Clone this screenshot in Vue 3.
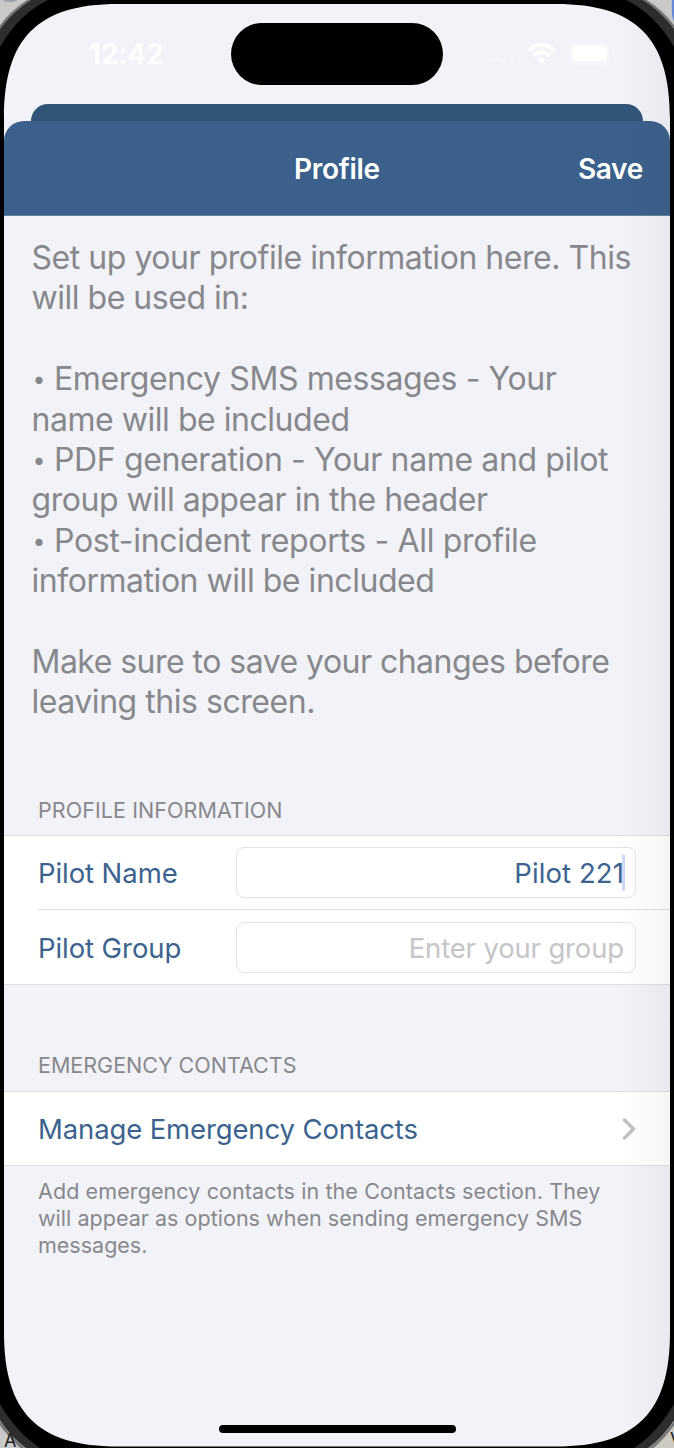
<script setup>
const intro = [
  { text: 'Set up your profile information here. This', cls: 'l1' },
  { text: 'will be used in:', cls: 'l2' },
  { text: '', cls: '' },
  { bullet: true, text: 'Emergency SMS messages - Your', cls: 'l3' },
  { text: 'name will be included', cls: 'l4' },
  { bullet: true, text: 'PDF generation - Your name and pilot', cls: 'l5' },
  { text: 'group will appear in the header', cls: 'l6' },
  { bullet: true, text: 'Post-incident reports - All profile', cls: 'l7' },
  { text: 'information will be included', cls: 'l8' },
  { text: '', cls: '' },
  { text: 'Make sure to save your changes before', cls: 'l9' },
  { text: 'leaving this screen.', cls: 'l10' },
]
const note = [
  { text: 'Add emergency contacts in the Contacts section. They', cls: 'n1' },
  { text: 'will appear as options when sending emergency SMS', cls: 'n2' },
  { text: 'messages.', cls: 'n3' },
]
</script>

<template>
  <div class="device">
    <div class="status">
      <span class="time">12:42</span>
      <div class="island"></div>
      <svg class="signals" width="140" height="30" viewBox="476 39 140 30">
        <g fill="#f6f7fa">
          <circle cx="484.5" cy="61" r="2" /><circle cx="493.5" cy="61" r="2" />
          <circle cx="502.5" cy="61" r="2" /><circle cx="512" cy="61" r="2" />
        </g>
        <g fill="none" stroke="#fff" stroke-width="4.2">
          <path d="M528.6 50.7Q541.5 39 554.4 50.7" />
          <path d="M533.4 55.6Q541.5 48.6 549.6 55.6" />
        </g>
        <path d="M537 59.3Q541.5 56 546 59.3L542.2 63Q541.5 63.6 540.8 63Z" fill="#fff" />
        <rect x="569.5" y="43.5" width="40" height="20.500" rx="6.500" fill="none" stroke="#f8f8fb" stroke-width="1.500" />
        <rect x="571.5" y="45.500" width="36" height="16" rx="4.500" fill="#fff" />
        <path d="M612.500 50.500Q616 53.500 612.500 57Z" fill="#f8f8fb" />
      </svg>
    </div>

    <div class="back-sheet"></div>
    <main class="sheet">
      <header class="nav">
        <span></span>
        <span class="title">Profile</span>
        <span class="save">Save</span>
      </header>

      <div class="intro">
        <div v-for="(l, i) in intro" :key="i" class="intro-line"><span v-if="l.bullet" class="bullet">•</span><span :class="l.cls">{{ l.text }}</span></div>
      </div>

      <h2 class="section first"><span class="s1">PROFILE INFORMATION</span></h2>
      <div class="group">
        <div class="row">
          <span class="label a1">Pilot Name</span>
          <div class="field"><span class="a2">Pilot 221</span><i class="caret"></i></div>
        </div>
        <div class="divider"></div>
        <div class="row">
          <span class="label a3">Pilot Group</span>
          <div class="field placeholder"><span class="a4">Enter your group</span></div>
        </div>
      </div>

      <h2 class="section second"><span class="s2">EMERGENCY CONTACTS</span></h2>
      <div class="group">
        <div class="row">
          <span class="label a5">Manage Emergency Contacts</span>
          <svg class="chevron" width="14" height="22" viewBox="0 0 14 22">
            <path d="M2.500 2L11.500 11L2.500 20" fill="none" stroke="#c1c1c3" stroke-width="3.400" stroke-linecap="round" stroke-linejoin="round" />
          </svg>
        </div>
      </div>
      <div class="note">
        <div v-for="(l, i) in note" :key="i"><span :class="l.cls">{{ l.text }}</span></div>
      </div>
    </main>

    <div class="shade"></div>
    <svg class="frame" width="674" height="1448" viewBox="0 0 674 1448">
      <path fill="#000" fill-rule="evenodd" d="M0 0H674V1448H0Z M4 118C4 38 38 4 118 4H556C636 4 670 38 670 118V1332.500C670 1412.500 636 1446.500 556 1446.500H118C38 1446.500 4 1412.500 4 1332.500Z" />
      <g fill="#2d2d2d">
        <path d="M0 0H48Q19 14 0 47Z" /><path d="M674 0H626Q655 14 674 47Z" />
        <path d="M0 1448H40Q17 1433 0 1404Z" /><path d="M674 1448H634Q657 1433 674 1404Z" />
      </g>
      <g fill="#8b8b8b">
        <path d="M0 0H31Q12 12 0 29Z" /><path d="M674 0H643Q662 12 674 29Z" />
        <path d="M0 1448H26Q11 1437 0 1420Z" /><path d="M674 1448H648Q663 1437 674 1420Z" />
      </g>
      <g fill="#c9c9c9">
        <path d="M0 0H27Q10 11 0 25Z" /><path d="M674 0H647Q664 11 674 25Z" />
        <path d="M0 1448H20Q9 1438 0 1426Z" /><path fill="#cdcac1" d="M674 1448H654Q665 1438 674 1426Z" />
      </g>
      <g fill="none" stroke="#555" stroke-width="0.8">
        <path d="M29 0Q12 11 0 27" /><path d="M645 0Q662 11 674 27" />
        <path d="M0 1423Q10 1438 23 1448" /><path d="M674 1423Q664 1438 651 1448" />
      </g>
      <ellipse cx="10" cy="0" rx="7" ry="2" fill="#9da2a8" />
      <path d="M674 0V22Q671 16 672 0Z" fill="#6688d5" />
      <text x="4" y="1447" class="edge">A</text>
      <text x="670" y="1446" class="edge">V</text>
    </svg>
    <div class="home"></div>
  </div>
</template>

<style>
html, body { margin: 0; overflow: hidden; }
</style>
<style scoped>
.device { position: relative; width: 674px; height: 1448px; overflow: hidden; background: #f2f3f8; font-family: Inter, "Liberation Sans", sans-serif; box-sizing: border-box; padding: 0 4px; }
.status { height: 104px; display: grid; grid-template-columns: 227px 212px 1fr; box-sizing: border-box; padding-top: 23px; }
.time { color: #fff; font-size: 28px; font-weight: 600; line-height: 34px; padding: 14px 0 0 85px; letter-spacing: .1px; }
.island { height: 62px; border-radius: 31px; background: #000; }
.signals { margin: 16px 0 0 33px; }
.back-sheet { height: 17px; margin: 0 27px; border-radius: 17px 17px 0 0; background: #315579; }
.nav { height: 95px; border-radius: 20px 20px 0 0; background: #3b608b; display: grid; grid-template-columns: 1fr auto 1fr; align-items: center; color: #fff; font-size: 28px; font-weight: 600; letter-spacing: -.3px; box-sizing: border-box; border-bottom: 1px solid #6383a5; padding: 2px 27px 0; }
.save { text-align: right; }
.intro { padding: 22px 27px 0 27.500px; color: #87888c; font-size: 32px; }
.intro-line { height: 40.400px; line-height: 40.400px; white-space: pre; letter-spacing: -.46px; }
.bullet { display: inline-block; width: 21.500px; height: 40px; font-size: 23px; padding-left: 1px; vertical-align: top; }
.l2 { letter-spacing: -.48px; }
.l3 { letter-spacing: -.4px; }
.l5 { letter-spacing: -.37px; }
.l7 { letter-spacing: -.33px; }
.l9 { letter-spacing: -.53px; }
.section { margin: 0; padding-left: 34px; font-size: 21.500px; line-height: 26px; font-weight: 400; color: #87888c; white-space: nowrap; }
.s1 { letter-spacing: .07px; }
.first { margin-top: 74px; }
.second { margin-top: 67px; }
.group { margin-top: 12px; background: #fff; border-top: 1px solid #dedfe2; border-bottom: 1px solid #dedfe2; }
.second + .group { margin-top: 13px; }
.row { height: 73.500px; display: flex; align-items: center; justify-content: space-between; padding: 1px 34px 0; box-sizing: border-box; font-size: 27.500px; white-space: nowrap; }
.label { color: #3b638e; }
.row span { line-height: 34px; padding-top: 1px; }
.a1, .a3 { letter-spacing: -.08px; }
.a2 { letter-spacing: .1px; }
.a4 { letter-spacing: -.15px; }
.a5 { letter-spacing: -.13px; }
.divider { height: 1px; margin-left: 34px; background: #dedfe2; }
.field { box-sizing: border-box; width: 400px; height: 51px; border: 1px solid #e3e3e5; border-radius: 8px; display: flex; align-items: center; justify-content: flex-end; padding-right: 11px; color: #3b638e; position: relative; }
.placeholder { color: #c5c5c7; }
.caret { position: absolute; right: 10px; top: 6px; width: 3px; height: 37px; border-radius: 1.500px; background: #d1d9fa; }
.note { padding: 12px 34px; color: #87888c; font-size: 21.500px; line-height: 27px; white-space: nowrap; }
.n1 { letter-spacing: .1px; }
.n2 { letter-spacing: .03px; }
.shade { position: absolute; right: 4px; top: 0; width: 50px; height: 1448px; background: linear-gradient(90deg, rgba(60, 65, 70, 0), rgba(60, 65, 70, .05)); }
.frame { position: absolute; left: 0; top: 0; }
.edge { font-size: 18px; fill: #222; }
.home { position: absolute; left: 219px; top: 1425px; width: 237px; height: 8px; border-radius: 4px; background: #000; }
</style>
